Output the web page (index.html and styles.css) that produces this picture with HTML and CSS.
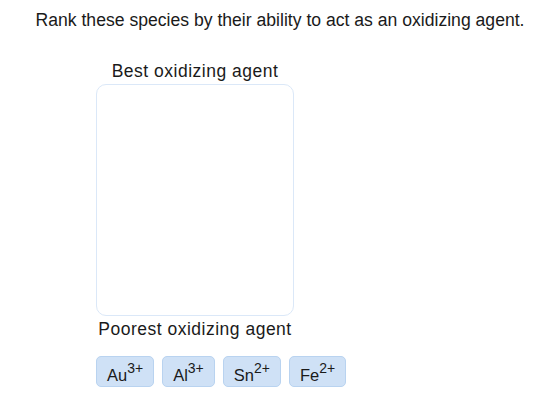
FILE: index.html
```html
<!DOCTYPE html>
<html lang='en'>
<head>
    <meta charset='UTF-8'>
    <meta name='viewport' content='width=device-width, initial-scale=1.0'>
    <title>Ranking Question</title>
    <link rel="stylesheet" href="styles.css">
</head>
<body>
    <p class='prompt'>Rank these species by their ability to act as an oxidizing agent.</p>

    <!-- Ranking target -->
    <div class='rank-column'>
        <div class='rank-label'>Best oxidizing agent</div>
        <div class='rank-box'></div>
        <div class='rank-label'>Poorest oxidizing agent</div>
    </div>

    <!-- Draggable items -->
    <div class='chip-row'>
        <div class='chip'>Au<sup>3+</sup></div>
        <div class='chip'>Al<sup>3+</sup></div>
        <div class='chip'>Sn<sup>2+</sup></div>
        <div class='chip'>Fe<sup>2+</sup></div>
    </div>
</body>
</html>
```

FILE: styles.css
```css
* {
    box-sizing: border-box;
    margin: 0;
    padding: 0;
    font-family: 'Liberation Sans', Arial, sans-serif;
}

body {
    background-color: #ffffff;
    color: #1a1a1a;
    font-size: 16px;
    line-height: 20px;
}

.prompt {
    padding-top: 10px;
    font-size: 17.6px;
    text-align: center;
}

.rank-column {
    width: 198px;
    margin: 31px 0 0 96px;
}

.rank-label {
    font-size: 17.5px;
    letter-spacing: 0.5px;
    text-align: center;
    white-space: nowrap;
    margin: 0 -20px;
}

.rank-box {
    height: 232px;
    margin: 3px 0;
    border: 1px solid #dbe8f8;
    border-radius: 10px;
    background-color: #ffffff;
}

.chip-row {
    display: flex;
    gap: 8px;
    margin: 17px 0 0 96px;
}

.chip {
    height: 31px;
    padding: 8px 10px 0;
    background-color: #cfe1f6;
    border: 1px solid #b9d3f0;
    border-radius: 5px;
    font-size: 16.5px;
    white-space: nowrap;
    cursor: grab;
}

.chip sup {
    font-size: 14px;
    line-height: 0;
    vertical-align: 8px;
}
```
